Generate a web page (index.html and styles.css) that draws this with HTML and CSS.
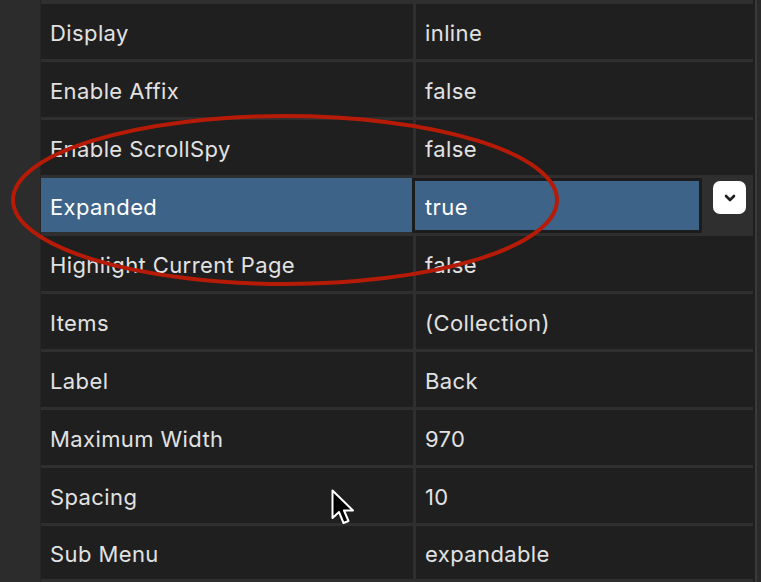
FILE: index.html
```html
<!DOCTYPE html>
<html>
<head>
<meta charset="utf-8">
<link rel="stylesheet" href="styles.css">
</head>
<body>
<div class="page">
  <div class="gutter"></div>
  <div class="grid">
    <div class="row"><div class="cell">Display</div><div class="cell">inline</div></div>
    <div class="row"><div class="cell">Enable Affix</div><div class="cell">false</div></div>
    <div class="row"><div class="cell">Enable ScrollSpy</div><div class="cell">false</div></div>
    <div class="row row-selected">
      <div class="cell cell-selected">Expanded</div>
      <div class="editor"><span class="editor-value">true</span></div>
      <div class="editor-side">
        <div class="dropdown-btn">
          <svg width="12" height="8" viewBox="0 0 12 8"><path d="M2 2 L6 6 L10 2" fill="none" stroke="#1f1f1f" stroke-width="2.6" stroke-linecap="round" stroke-linejoin="round"/></svg>
        </div>
      </div>
    </div>
    <div class="row"><div class="cell">Highlight Current Page</div><div class="cell">false</div></div>
    <div class="row"><div class="cell">Items</div><div class="cell">(Collection)</div></div>
    <div class="row"><div class="cell">Label</div><div class="cell">Back</div></div>
    <div class="row"><div class="cell">Maximum Width</div><div class="cell">970</div></div>
    <div class="row"><div class="cell">Spacing</div><div class="cell">10</div></div>
    <div class="row row-last"><div class="cell">Sub Menu</div><div class="cell">expandable</div></div>
  </div>
  <div class="edge"><div class="edge-dark"></div><div class="edge-light"></div><div class="edge-mid"></div></div>

  <svg class="annotation" width="761" height="582" viewBox="0 0 761 582">
    <ellipse cx="285" cy="200" rx="272" ry="84" fill="none" stroke="#b51b06" stroke-width="4"/>
  </svg>
  <svg class="cursor" width="26" height="38" viewBox="0 0 26 38">
    <path d="M1.5 1.5 L1.5 29 L8 23 L12.5 34 L17.5 32 L13 21.5 L22 21.5 Z" fill="#000" stroke="#fff" stroke-width="2" stroke-linejoin="round"/>
  </svg>
</div>
</body>
</html>
```

FILE: styles.css
```css
html, body {
  margin: 0;
  padding: 0;
  background: #2c2c2c;
}

.page {
  position: relative;
  width: 761px;
  height: 582px;
  overflow: hidden;
  display: flex;
  background: #2c2c2c;
  font-family: Inter, "Noto Sans", "Liberation Sans", sans-serif;
  font-size: 22px;
  letter-spacing: 0.4px;
  color: #e2e2e2;
}

.gutter {
  width: 40px;
  flex: none;
  background: #2c2c2c;
  border-right: 1px solid #252525;
}

.grid {
  width: 712px;
  flex: none;
  display: flex;
  flex-direction: column;
  gap: 3px;
  padding-top: 4px;
  background: #2f2f2f;
}

.row {
  display: grid;
  grid-template-columns: 372px 1fr;
  column-gap: 3px;
  height: 55px;
  flex: none;
}

.row-last {
  height: 53px;
}

.cell {
  background: #1f1f1f;
  display: flex;
  align-items: center;
  padding: 3px 9px 0;
  white-space: nowrap;
}

.row-selected {
  display: flex;
  column-gap: 0;
  background: #2f2f2f;
}

.cell-selected {
  width: 371px;
  flex: none;
  box-sizing: border-box;
  background: #3e6388;
  color: #fff;
  height: 54px;
}

.editor {
  width: 290px;
  height: 55px;
  flex: none;
  box-sizing: border-box;
  border: 3px solid #1c1c1c;
  background: #3e6388;
  display: flex;
  align-items: center;
  padding: 0 10px;
  color: #fff;
}

.editor-value {
  padding-top: 3px;
}

.editor-side {
  flex: 1;
  padding: 3px 0 0 11px;
}

.dropdown-btn {
  width: 33px;
  height: 33px;
  background: #fff;
  border-radius: 7px;
  display: flex;
  align-items: center;
  justify-content: center;
}

.edge {
  flex: 1;
  display: flex;
}

.edge-dark {
  width: 2px;
  background: #1f1f1f;
}

.edge-light {
  width: 2px;
  background: #3a3a3a;
}

.edge-mid {
  flex: 1;
  background: #2a2a2a;
}

.annotation {
  position: absolute;
  left: 0;
  top: 0;
  pointer-events: none;
}

.cursor {
  position: absolute;
  left: 331px;
  top: 489px;
}
```
